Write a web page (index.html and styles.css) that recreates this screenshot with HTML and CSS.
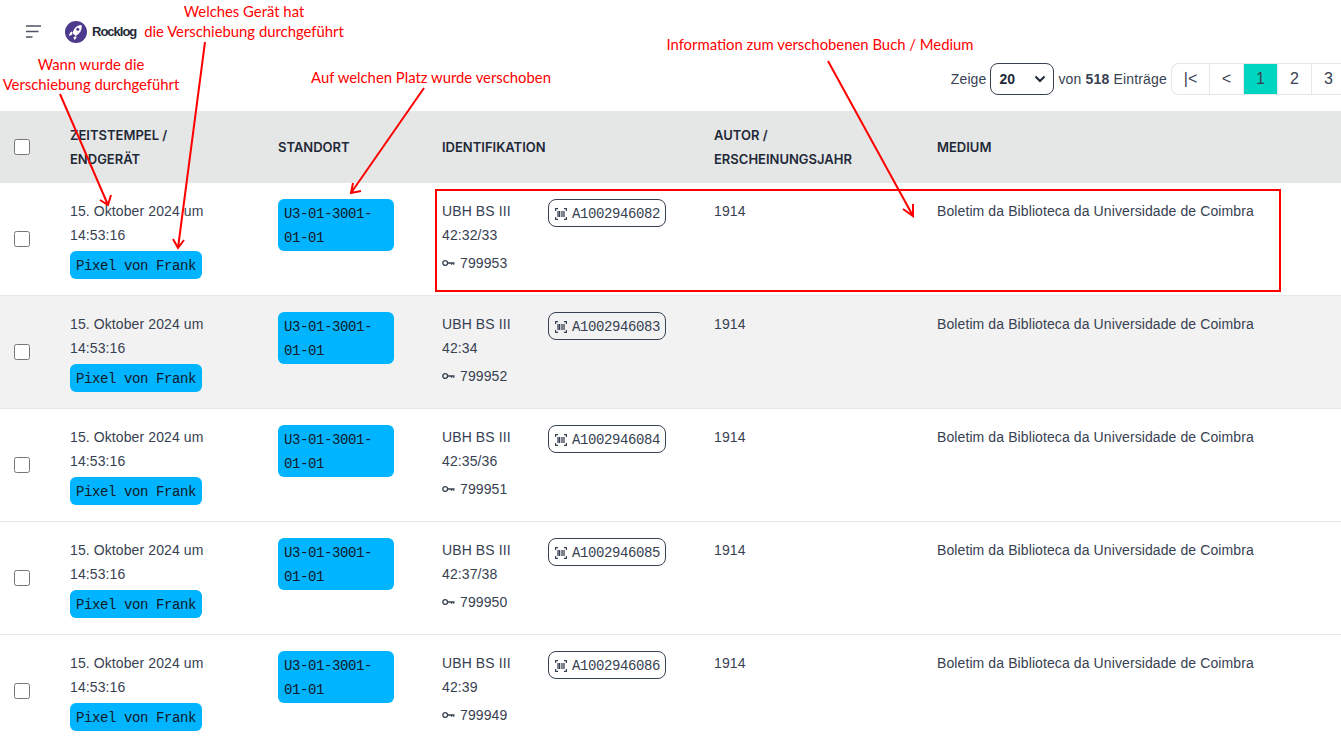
FILE: index.html
```html
<!DOCTYPE html>
<html lang="de">
<head>
<meta charset="utf-8">
<title>Rocklog</title>
<link rel="stylesheet" href="styles.css">
</head>
<body>
<header class="topbar">
  <button class="menu" aria-label="Menü"><svg width="16" height="14" viewBox="0 0 16 14"><path d="M0 1h15M0 6.500h12.500M0 12h6.500" stroke="#4b5563" stroke-width="1.600" fill="none"/></svg></button>
  <div class="logo">
    <svg width="22" height="22" viewBox="0 0 22 22"><circle cx="11" cy="11" r="11" fill="#4d3a8c"/><path d="M16.500 4c-3.200 0-6 1.500-7.500 4.500L7.300 12l3.400 3 3-2.300C16.300 10.500 17.200 7 16.500 4zM7 10.500c-1.700.5-2.800 2.200-3 4.500l3.200-1.200zM11.500 15.200c0 1.700-.7 3-2.300 3.800l-.7-3z" fill="#fff"/><circle cx="12.800" cy="8.300" r="1.500" fill="#4d3a8c"/></svg>
    <span class="logo-text">Rocklog</span>
  </div>
</header>
<div class="toolbar">
  <span>Zeige</span>
  <span class="select"><b>20</b><svg width="12" height="8" viewBox="0 0 12 8"><path d="M1.500 1.500 6 6l4.500-4.500" stroke="#1f2937" stroke-width="2" fill="none"/></svg></span>
  <span class="count">von <b>518</b> Einträge</span>
  <nav class="pager">
    <span class="page wide">|&lt;</span><span class="page">&lt;</span><span class="page active">1</span><span class="page">2</span><span class="page">3</span>
  </nav>
</div>
<table class="grid">
  <colgroup><col class="c1"><col class="c2"><col class="c3"><col class="c4"><col class="c5"><col class="c6"></colgroup>
  <thead>
    <tr><th><span class="check"></span></th><th>ZEITSTEMPEL /<br>ENDGERÄT</th><th>STANDORT</th><th>IDENTIFIKATION</th><th>AUTOR /<br>ERSCHEINUNGSJAHR</th><th>MEDIUM</th></tr>
  </thead>
  <tbody>
    <tr><td><span class="check"></span></td><td><div class="stamp">15. Oktober 2024 um 14:53:16</div><span class="tag device">Pixel von Frank</span></td><td><span class="tag place">U3-01-3001-01-01</span></td><td><div class="ident"><div><div>UBH BS III<br>42:32/33</div><div class="key"><svg width="13" height="8" viewBox="0 0 13 8"><circle cx="3.200" cy="4" r="2.400" stroke="#374151" stroke-width="1.300" fill="none"/><path d="M5.500 4h7M9.500 4v1.700M11.700 4v1.700" stroke="#374151" stroke-width="1.300" fill="none"/></svg>799953</div></div><span class="barcode"><svg width="12" height="12" viewBox="0 0 12 12"><path d="M.6 3V.6h2.400M9 .6h2.400V3M.6 9v2.400h2.400M9 11.400h2.400V9" stroke="#374151" stroke-width="1.200" fill="none"/><path d="M3 3v6M4.600 3v6M7 3v6M9 3v6" stroke="#374151" stroke-width="1.300"/></svg>A1002946082</span></div></td><td>1914</td><td>Boletim da Biblioteca da Universidade de Coimbra</td></tr>
    <tr class="hover"><td><span class="check"></span></td><td><div class="stamp">15. Oktober 2024 um 14:53:16</div><span class="tag device">Pixel von Frank</span></td><td><span class="tag place">U3-01-3001-01-01</span></td><td><div class="ident"><div><div>UBH BS III<br>42:34</div><div class="key"><svg width="13" height="8" viewBox="0 0 13 8"><circle cx="3.200" cy="4" r="2.400" stroke="#374151" stroke-width="1.300" fill="none"/><path d="M5.500 4h7M9.500 4v1.700M11.700 4v1.700" stroke="#374151" stroke-width="1.300" fill="none"/></svg>799952</div></div><span class="barcode"><svg width="12" height="12" viewBox="0 0 12 12"><path d="M.6 3V.6h2.400M9 .6h2.400V3M.6 9v2.400h2.400M9 11.400h2.400V9" stroke="#374151" stroke-width="1.200" fill="none"/><path d="M3 3v6M4.600 3v6M7 3v6M9 3v6" stroke="#374151" stroke-width="1.300"/></svg>A1002946083</span></div></td><td>1914</td><td>Boletim da Biblioteca da Universidade de Coimbra</td></tr>
    <tr><td><span class="check"></span></td><td><div class="stamp">15. Oktober 2024 um 14:53:16</div><span class="tag device">Pixel von Frank</span></td><td><span class="tag place">U3-01-3001-01-01</span></td><td><div class="ident"><div><div>UBH BS III<br>42:35/36</div><div class="key"><svg width="13" height="8" viewBox="0 0 13 8"><circle cx="3.200" cy="4" r="2.400" stroke="#374151" stroke-width="1.300" fill="none"/><path d="M5.500 4h7M9.500 4v1.700M11.700 4v1.700" stroke="#374151" stroke-width="1.300" fill="none"/></svg>799951</div></div><span class="barcode"><svg width="12" height="12" viewBox="0 0 12 12"><path d="M.6 3V.6h2.400M9 .6h2.400V3M.6 9v2.400h2.400M9 11.400h2.400V9" stroke="#374151" stroke-width="1.200" fill="none"/><path d="M3 3v6M4.600 3v6M7 3v6M9 3v6" stroke="#374151" stroke-width="1.300"/></svg>A1002946084</span></div></td><td>1914</td><td>Boletim da Biblioteca da Universidade de Coimbra</td></tr>
    <tr><td><span class="check"></span></td><td><div class="stamp">15. Oktober 2024 um 14:53:16</div><span class="tag device">Pixel von Frank</span></td><td><span class="tag place">U3-01-3001-01-01</span></td><td><div class="ident"><div><div>UBH BS III<br>42:37/38</div><div class="key"><svg width="13" height="8" viewBox="0 0 13 8"><circle cx="3.200" cy="4" r="2.400" stroke="#374151" stroke-width="1.300" fill="none"/><path d="M5.500 4h7M9.500 4v1.700M11.700 4v1.700" stroke="#374151" stroke-width="1.300" fill="none"/></svg>799950</div></div><span class="barcode"><svg width="12" height="12" viewBox="0 0 12 12"><path d="M.6 3V.6h2.400M9 .6h2.400V3M.6 9v2.400h2.400M9 11.400h2.400V9" stroke="#374151" stroke-width="1.200" fill="none"/><path d="M3 3v6M4.600 3v6M7 3v6M9 3v6" stroke="#374151" stroke-width="1.300"/></svg>A1002946085</span></div></td><td>1914</td><td>Boletim da Biblioteca da Universidade de Coimbra</td></tr>
    <tr><td><span class="check"></span></td><td><div class="stamp">15. Oktober 2024 um 14:53:16</div><span class="tag device">Pixel von Frank</span></td><td><span class="tag place">U3-01-3001-01-01</span></td><td><div class="ident"><div><div>UBH BS III<br>42:39</div><div class="key"><svg width="13" height="8" viewBox="0 0 13 8"><circle cx="3.200" cy="4" r="2.400" stroke="#374151" stroke-width="1.300" fill="none"/><path d="M5.500 4h7M9.500 4v1.700M11.700 4v1.700" stroke="#374151" stroke-width="1.300" fill="none"/></svg>799949</div></div><span class="barcode"><svg width="12" height="12" viewBox="0 0 12 12"><path d="M.6 3V.6h2.400M9 .6h2.400V3M.6 9v2.400h2.400M9 11.400h2.400V9" stroke="#374151" stroke-width="1.200" fill="none"/><path d="M3 3v6M4.600 3v6M7 3v6M9 3v6" stroke="#374151" stroke-width="1.300"/></svg>A1002946086</span></div></td><td>1914</td><td>Boletim da Biblioteca da Universidade de Coimbra</td></tr>
  </tbody>
</table>
<svg class="arrows" width="1341" height="745" viewBox="0 0 1341 745">
  <g stroke="#ff0000" stroke-width="2" fill="none">
    <path d="M60 94 108 205M100 200l8 5 3-10"/>
    <path d="M205 42 178 248M173 239l5 9 6-8"/>
    <path d="M424 88 351 193M353 183l-2 10 10-2"/>
    <path d="M828 61 913 216M903 209l10 7 0-12"/>
    <rect x="436" y="190" width="844" height="101"/>
  </g>
</svg>
<p class="note n1">Wann wurde die<br>Verschiebung durchgeführt</p>
<p class="note n2">Welches Gerät hat<br>die Verschiebung durchgeführt</p>
<p class="note n3">Auf welchen Platz wurde verschoben</p>
<p class="note n4">Information zum verschobenen Buch / Medium</p>
</body>
</html>
```
FILE: styles.css
```css
* { box-sizing: border-box; }
html, body { margin: 0; height: 745px; overflow: hidden; }
body { position: relative; background: #fff; color: #1f2937; font: 14px/24px "Liberation Sans", Arial, sans-serif; letter-spacing: 0.1px; }
.topbar { display: flex; align-items: center; height: 63px; padding-left: 26px; }
.menu { display: flex; padding: 0; border: 0; background: none; width: 39px; }
.logo { display: flex; align-items: center; gap: 5px; }
.logo-text { font-weight: 700; font-size: 13px; letter-spacing: -1px; color: #1f2937; }
.toolbar { display: flex; align-items: center; justify-content: flex-end; gap: 4px; height: 32px; margin-right: -5px; white-space: nowrap; color: #374151; }
.select { display: flex; align-items: center; justify-content: space-between; width: 64px; height: 32px; padding: 0 7px 0 8px; border: 1px solid #374151; border-radius: 8px; color: #1f2937; }
.count { letter-spacing: 0.17px; }
.pager { display: flex; height: 32px; border: 1px solid #e5e7eb; border-right: 0; border-radius: 8px 0 0 8px; font-size: 16px; line-height: 30px; letter-spacing: 0; }
.page { width: 34px; text-align: center; border-right: 1px solid #e5e7eb; }
.wide { width: 38px; }
.active { background: #00d5c0; }
.grid { width: 1341px; margin-top: 16px; border-collapse: separate; border-spacing: 0; table-layout: fixed; }
.c1 { width: 64px; }
.c2 { width: 208px; }
.c3 { width: 164px; }
.c4 { width: 272px; }
.c5 { width: 223px; }
th { height: 72px; padding: 0 6px; background: #e5e7e7; text-align: left; font: 600 13px/24px Inter, "Liberation Sans", sans-serif; letter-spacing: 0; vertical-align: middle; color: #1f2937; }
td { height: 113px; padding: 16px 6px 0; vertical-align: top; border-bottom: 1px solid #e5e7eb; color: #374151; }
tr.hover { background: #f2f2f2; }
th:first-child, td:first-child { padding: 0 0 0 14px; vertical-align: middle; }
.check { display: block; width: 16px; height: 16px; border: 1px solid #767676; border-radius: 2.500px; background: #fff; }
.stamp { width: 150px; }
.tag { display: inline-block; background: #00b4ff; border-radius: 6px; color: #111827; font-family: "Liberation Mono", monospace; font-size: 14px; letter-spacing: -0.4px; padding: 3px 6px 1px; }
.device { width: 132px; height: 28px; margin-top: 4px; white-space: nowrap; }
.place { width: 116px; height: 52px; line-height: 24px; }
.ident { display: flex; }
.ident > div:first-child { width: 106px; }
.key { display: flex; align-items: center; gap: 5px; margin-top: 4px; }
.barcode { display: flex; align-items: center; gap: 5px; width: 118px; height: 28px; padding: 1px 0 0 6px; border: 1px solid #374151; border-radius: 8px; font-family: "Liberation Mono", monospace; font-size: 14px; letter-spacing: -0.4px; }
.arrows { position: absolute; left: 0; top: 0; pointer-events: none; }
.note { position: absolute; margin: 0; color: #f00; font: 14.850px/20px Lato, "Open Sans", sans-serif; letter-spacing: 0; text-align: center; white-space: nowrap; transform: translateX(-50%); }
.n1 { left: 91px; top: 54px; }
.n2 { left: 244px; top: 1px; }
.n3 { left: 431px; top: 67px; }
.n4 { left: 820px; top: 34px; }
```
